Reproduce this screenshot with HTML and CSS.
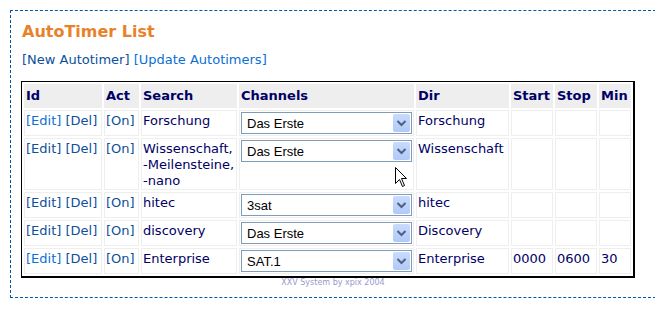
FILE: index.html
```html
<!DOCTYPE html>
<html lang="en">
<head>
    <meta charset="UTF-8">
    <title>AutoTimer List</title>
    <link rel="stylesheet" href="styles.css">
</head>
<body>
    <div class="box">
        <h1>AutoTimer List</h1>
        <p class="actions">
            <a href="#" class="visited">[New Autotimer]</a>
            <a href="#">[Update Autotimers]</a>
        </p>

        <table class="timers">
            <tr>
                <th class="c-id">Id</th>
                <th class="c-act">Act</th>
                <th class="c-search">Search</th>
                <th class="c-chan">Channels</th>
                <th class="c-dir">Dir</th>
                <th class="c-start">Start</th>
                <th class="c-stop">Stop</th>
                <th class="c-min">Min</th>
            </tr>
            <tr>
                <td><a href="#">[Edit]</a> <a href="#" class="visited">[Del]</a></td>
                <td><a href="#" class="visited">[On]</a></td>
                <td>Forschung</td>
                <td>
                    <div class="dropdown">
                        <select><option>Das Erste</option></select>
                        <span class="arrow"><svg width="17" height="18" viewBox="0 0 17 18"><path d="M4.5 7 L8.5 11 L12.5 7" fill="none" stroke="#4d6185" stroke-width="2"/></svg></span>
                    </div>
                </td>
                <td>Forschung</td>
                <td></td>
                <td></td>
                <td></td>
            </tr>
            <tr>
                <td><a href="#" class="visited">[Edit]</a> <a href="#" class="visited">[Del]</a></td>
                <td><a href="#" class="visited">[On]</a></td>
                <td class="search"><span>Wissenschaft,</span> <span>-Meilensteine,</span> <span>-nano</span></td>
                <td>
                    <div class="dropdown">
                        <select><option>Das Erste</option></select>
                        <span class="arrow"><svg width="17" height="18" viewBox="0 0 17 18"><path d="M4.5 7 L8.5 11 L12.5 7" fill="none" stroke="#4d6185" stroke-width="2"/></svg></span>
                    </div>
                </td>
                <td>Wissenschaft</td>
                <td></td>
                <td></td>
                <td></td>
            </tr>
            <tr>
                <td><a href="#" class="visited">[Edit]</a> <a href="#" class="visited">[Del]</a></td>
                <td><a href="#" class="visited">[On]</a></td>
                <td>hitec</td>
                <td>
                    <div class="dropdown">
                        <select><option>3sat</option></select>
                        <span class="arrow"><svg width="17" height="18" viewBox="0 0 17 18"><path d="M4.5 7 L8.5 11 L12.5 7" fill="none" stroke="#4d6185" stroke-width="2"/></svg></span>
                    </div>
                </td>
                <td>hitec</td>
                <td></td>
                <td></td>
                <td></td>
            </tr>
            <tr>
                <td><a href="#" class="visited">[Edit]</a> <a href="#" class="visited">[Del]</a></td>
                <td><a href="#" class="visited">[On]</a></td>
                <td>discovery</td>
                <td>
                    <div class="dropdown">
                        <select><option>Das Erste</option></select>
                        <span class="arrow"><svg width="17" height="18" viewBox="0 0 17 18"><path d="M4.5 7 L8.5 11 L12.5 7" fill="none" stroke="#4d6185" stroke-width="2"/></svg></span>
                    </div>
                </td>
                <td>Discovery</td>
                <td></td>
                <td></td>
                <td></td>
            </tr>
            <tr>
                <td><a href="#">[Edit]</a> <a href="#" class="visited">[Del]</a></td>
                <td><a href="#" class="visited">[On]</a></td>
                <td>Enterprise</td>
                <td>
                    <div class="dropdown">
                        <select><option>SAT.1</option></select>
                        <span class="arrow"><svg width="17" height="18" viewBox="0 0 17 18"><path d="M4.5 7 L8.5 11 L12.5 7" fill="none" stroke="#4d6185" stroke-width="2"/></svg></span>
                    </div>
                </td>
                <td>Enterprise</td>
                <td>0000</td>
                <td>0600</td>
                <td>30</td>
            </tr>
        </table>

        <div class="footer">XXV System by xpix 2004</div>
    </div>

    <!-- mouse pointer from the screenshot -->
    <svg class="cursor" width="13" height="21" viewBox="0 0 13 21">
        <path d="M0.5 0.5 L0.5 16.5 L4.5 12.5 L7.5 19.5 L9.5 18.5 L6.5 11.5 L11.5 11.5 Z" fill="#fff" stroke="#000" stroke-width="1"/>
    </svg>
</body>
</html>
```

FILE: styles.css
```css
body {
    margin: 10px;
    font-family: "DejaVu Sans", Verdana, sans-serif;
    font-size: 13px;
    color: #000066;
    background-color: #fff;
}
.box {
    width: 624px;
    border: 1px dashed #0058a6;
    padding: 11px 10px 9px 10px;
}
h1 {
    margin: 0 0 0 1px;
    font-size: 16px;
    line-height: 20px;
    color: #e8822a;
}
a {
    color: #0a6fd6;
    text-decoration: none;
}
a.visited {
    color: #0d4f9c;
}
.actions {
    margin: 10px 0 0 1px;
    line-height: 16px;
}
.timers {
    margin-top: 13px;
    border-top: 1px solid #000;
    border-left: 1px solid #000;
    border-right: 2px solid #000;
    border-bottom: 2px solid #000;
    border-spacing: 2px;
}
.timers th,
.timers td {
    border: 1px solid #eeeeee;
    vertical-align: top;
    text-align: left;
    line-height: 16px;
}
.timers th {
    background-color: #eeeeee;
    padding: 3px 1px;
    font-weight: bold;
    white-space: nowrap;
}
.timers td {
    padding: 2px 1px 0 1px;
    white-space: nowrap;
}
.timers td.search {
    white-space: normal;
}
.search span {
    white-space: nowrap;
}
.c-id { width: 74px; }
.c-act { width: 31px; }
.c-search { width: 92px; }
.c-chan { width: 171px; }
.c-dir { width: 89px; }
.c-start { width: 38px; }
.c-stop { width: 38px; }
.c-min { width: 28px; }
.dropdown {
    position: relative;
    width: 171px;
    height: 22px;
    margin: -1px 0 1px 0;
}
.dropdown select {
    appearance: none;
    -webkit-appearance: none;
    box-sizing: border-box;
    width: 171px;
    height: 22px;
    margin: 0;
    padding: 0 0 0 5px;
    border: 1px solid #7f9db9;
    border-radius: 0;
    background-color: #fff;
    font-family: "Liberation Sans", Arial, sans-serif;
    font-size: 13px;
    color: #000;
}
.dropdown .arrow {
    position: absolute;
    top: 2px;
    right: 2px;
    width: 17px;
    height: 18px;
    border-radius: 2px;
    background: linear-gradient(#c9dafc, #b2c9f7);
    pointer-events: none;
}
.dropdown .arrow svg {
    display: block;
}
.footer {
    font-size: 8px;
    line-height: 10px;
    text-align: center;
    color: #9999cc;
}
.cursor {
    position: absolute;
    left: 395px;
    top: 167px;
}
```
